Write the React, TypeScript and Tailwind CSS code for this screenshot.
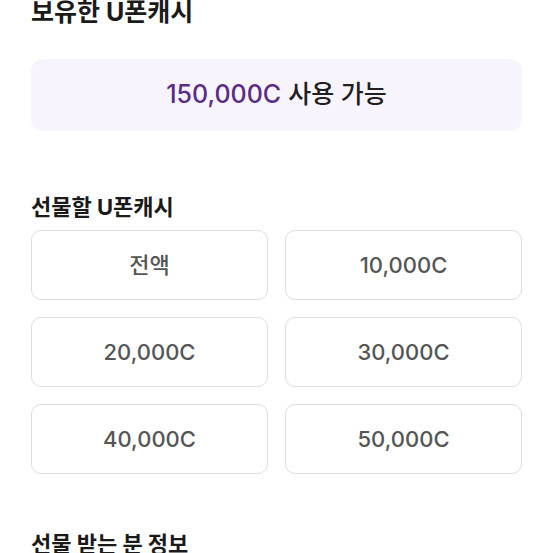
import React from "react";

const amounts = ["전액", "10,000C", "20,000C", "30,000C", "40,000C", "50,000C"];

export default function App() {
  return (
    <div
      className="w-[553px] h-[553px] overflow-hidden bg-white px-[31px]"
      style={{ fontFamily: 'Inter, "Noto Sans CJK KR", sans-serif' }}
    >
      {/* 보유 캐시 */}
      <h2 className="mt-[-5px] text-[25px] leading-[34px] font-bold text-[#1a1a1a]">보유한 U폰캐시</h2>
      <div className="mt-[30px] h-[72px] rounded-[12px] bg-[#f8f4fd] flex items-center justify-center text-[25px] font-medium">
        <span className="text-[#5a2d84]">150,000C</span>
        <span className="ml-[7px] text-[#1f1f1f]">사용 가능</span>
      </div>

      {/* 선물할 캐시 */}
      <h3 className="mt-[60px] text-[22px] leading-[32px] font-bold text-[#1a1a1a]">선물할 U폰캐시</h3>
      <div className="mt-[7px] grid grid-cols-2 gap-x-[17px] gap-y-[17px]">
        {amounts.map((a) => (
          <button
            key={a}
            className="h-[70px] rounded-[10px] border border-[#dedede] bg-white text-[22px] font-medium text-[#555555]"
          >
            {a}
          </button>
        ))}
      </div>

      {/* 받는 분 */}
      <h3 className="mt-[54px] text-[22px] leading-[32px] font-bold text-[#1a1a1a]">선물 받는 분 정보</h3>
    </div>
  );
}
